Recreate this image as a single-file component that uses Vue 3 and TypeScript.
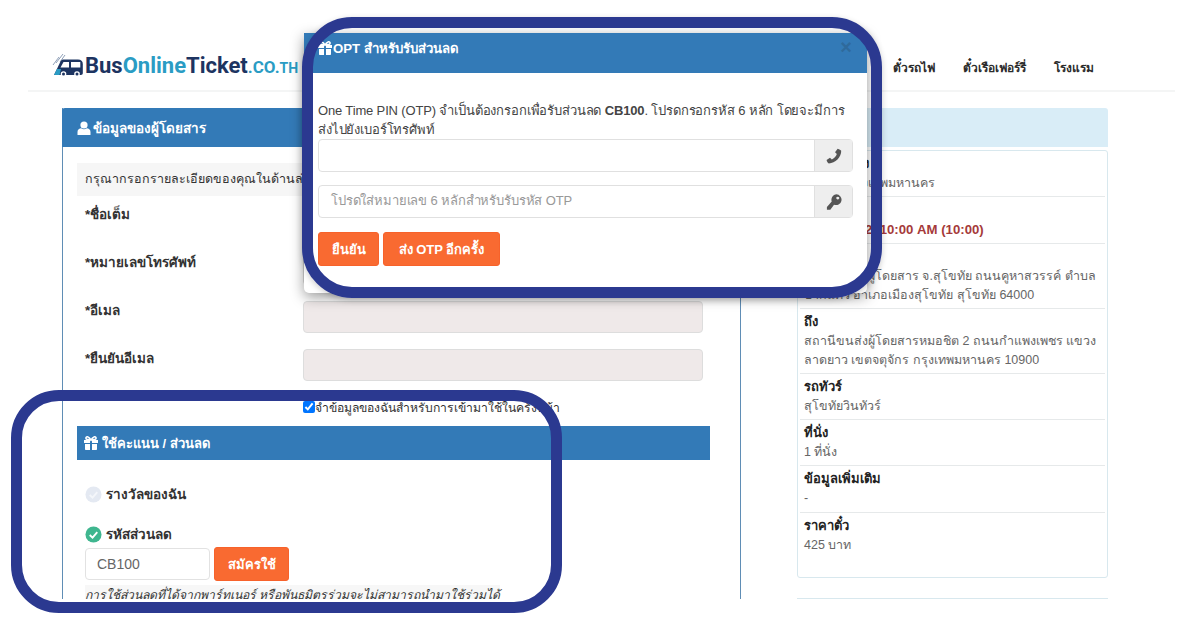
<template>
  <div class="shot">
    <div class="page">
      <header class="topbar">
        <a class="logo">
          <svg class="logo-bus" viewBox="0 0 32 24" width="32" height="24">
            <path d="M1 12 7 4M4 10l7-9M8 9l5-7" stroke="#8fa0b8" stroke-width="1" fill="none" />
            <path d="M2 22 8.500 8.500C9.300 7 10.200 6.500 12 6.500h14c3 0 4.800 1.700 4.800 4.300V20c0 1.300-.7 2-2 2z" fill="#1d3461" />
            <path d="M11.500 9H17v5.500H8.500zM19 9h9.300v5.500H19z" fill="#fff" />
            <path d="M2 22 5 16h4l-1.500 6z" fill="#2a9cc4" />
            <circle cx="11.500" cy="21" r="2.800" fill="#fff" />
            <circle cx="11.500" cy="21" r="1.500" fill="#1d3461" />
            <circle cx="25" cy="21" r="2.800" fill="#fff" />
            <circle cx="25" cy="21" r="1.500" fill="#1d3461" />
          </svg>
          <span class="logo-text">
            <span class="navy">Bus</span><span class="teal">Online</span><span class="navy">Ticket</span><span class="teal small">.CO.</span><span class="teal tiny">TH</span>
          </span>
        </a>
        <nav class="menu">
          <a v-for="link in navLinks" :key="link">{{ link }}</a>
        </nav>
      </header>

      <main class="content">
        <section class="panel-left">
          <h3 class="panel-head">
            <svg class="ico" viewBox="0 0 14 14" width="14" height="14">
              <circle cx="7" cy="4" r="3.600" fill="#fff" />
              <path d="M0.500 14V11c0-2.600 2-3.800 3.600-3.800C5 8 6 8.300 7 8.300S9 8 9.900 7.200c1.600 0 3.600 1.200 3.600 3.800v3z" fill="#fff" />
            </svg>
            ข้อมูลของผู้โดยสาร
          </h3>
          <div class="panel-body">
            <div class="hint">กรุณากรอกรายละเอียดของคุณในด้านล่าง</div>
            <div v-for="row in formRows" :key="row" class="form-row">
              <label>{{ row }}</label>
              <div class="field"></div>
            </div>
            <div class="remember">
              <input type="checkbox" checked />
              <span>จำข้อมูลของฉันสำหรับการเข้ามาใช้ในครั้งหน้า</span>
            </div>
            <h4 class="bar">
              <svg class="ico" viewBox="0 0 14 14" width="14" height="14">
                <path d="M0 4h6v3H0zM8 4h6v3H8zM1 8h5v6H2c-.6 0-1-.4-1-1zM8 8h5v5c0 .6-.4 1-1 1H8z" fill="#fff" />
                <path d="M7 4C5 .5 2.500 0 2 1.800S4 4 7 4c3 0 5.500-.4 5-2.200S9 .5 7 4z" fill="none" stroke="#fff" stroke-width="1.600" />
              </svg>
              ใช้คะแนน / ส่วนลด
            </h4>
            <div class="choice reward">
              <svg viewBox="0 0 18 18" width="17" height="17">
                <circle cx="9" cy="9" r="8.500" fill="#e4e9f2" />
                <path d="M5 9.500 8 12.300 13 6.500" stroke="#f4f6fa" stroke-width="2" fill="none" />
              </svg>
              <b>รางวัลของฉัน</b>
            </div>
            <div class="choice code">
              <svg viewBox="0 0 18 18" width="17" height="17">
                <circle cx="9" cy="9" r="8.500" fill="#3fb68f" />
                <path d="M5 9.500 8 12.300 13 6.500" stroke="#fff" stroke-width="2" fill="none" />
              </svg>
              <b>รหัสส่วนลด</b>
            </div>
            <div class="apply">
              <div class="code-input">CB100</div>
              <button class="btn-orange">สมัครใช้</button>
            </div>
            <p class="note">การใช้ส่วนลดที่ได้จากพาร์ทเนอร์ หรือพันธมิตรร่วมจะไม่สามารถนำมาใช้ร่วมได้</p>
          </div>
        </section>

        <aside class="side">
          <div class="side-head"></div>
          <ul class="summary">
            <li v-for="item in tripInfo" :key="item.label" :class="item.cls">
              <b>{{ item.label }}</b>
              <span :class="{ red: item.red }">{{ item.value }}</span>
            </li>
          </ul>
          <div class="side-next"></div>
        </aside>
      </main>
    </div>

    <!-- popup sits over the form -->
    <div class="modal">
      <div class="modal-head">
        <svg class="ico" viewBox="0 0 14 14" width="14" height="14">
          <path d="M0 4h6v3H0zM8 4h6v3H8zM1 8h5v6H2c-.6 0-1-.4-1-1zM8 8h5v5c0 .6-.4 1-1 1H8z" fill="#fff" />
          <path d="M7 4C5 .5 2.500 0 2 1.800S4 4 7 4c3 0 5.500-.4 5-2.200S9 .5 7 4z" fill="none" stroke="#fff" stroke-width="1.600" />
        </svg>
        <span>OPT สำหรับรับส่วนลด</span>
        <i class="close">×</i>
      </div>
      <div class="modal-body">
        <p>One Time PIN (OTP) จำเป็นต้องกรอกเพื่อรับส่วนลด <b>CB100</b>. โปรดกรอกรหัส 6 หลัก โดยจะมีการส่งไปยังเบอร์โทรศัพท์</p>
        <div class="input-group">
          <div class="ig-field"></div>
          <div class="ig-addon">
            <svg viewBox="0 0 14 14" width="16" height="16">
              <path d="M10.200.600c1.600.5 2.700 1.100 3.100 1.900.3 5.500-5.300 11-10.800 11-.9-.3-1.600-1.400-2-2.900l3-2 1.600 1.400c1.900-.9 3.700-2.800 4.400-4.800L7.900 3.700z" fill="#555" />
            </svg>
          </div>
        </div>
        <div class="input-group">
          <div class="ig-field placeholder">โปรดใส่หมายเลข 6 หลักสำหรับรับรหัส OTP</div>
          <div class="ig-addon">
            <svg viewBox="0 0 14 14" width="16" height="16">
              <path d="M9 .300a4.700 4.700 0 1 1-2 9L3.800 13.800H.800v-2.400L5 6.500A4.700 4.700 0 0 1 9 .300zm1.300 2a1.300 1.300 0 1 0 .01 0z" fill="#555" fill-rule="evenodd" />
            </svg>
          </div>
        </div>
        <div class="modal-actions">
          <button class="btn-orange">ยืนยัน</button>
          <button class="btn-orange wide">ส่ง OTP อีกครั้ง</button>
        </div>
      </div>
    </div>

    <!-- rounded highlight frames drawn on top of the screenshot -->
    <div class="ring ring-modal"></div>
    <div class="ring ring-promo"></div>
  </div>
</template>

<script setup lang="ts">
interface TripItem {
  label: string;
  value: string;
  red?: boolean;
  cls: string;
}

const navLinks: string[] = ['ตั๋วรถไฟ', 'ตั๋วเรือเฟอร์รี่', 'โรงแรม'];

const formRows: string[] = ['*ชื่อเต็ม', '*หมายเลขโทรศัพท์', '*อีเมล', '*ยืนยันอีเมล'];

const tripInfo: TripItem[] = [
  { label: 'การเดินทาง', value: 'สุโขทัย-กรุงเทพมหานคร', cls: 'h-46' },
  { label: 'วันเดินทาง', value: '2 ส.ค. 2022, 10:00 AM (10:00)', red: true, cls: 'h-47' },
  { label: 'จาก', value: 'สถานีขนส่งผู้โดยสาร จ.สุโขทัย ถนนคูหาสวรรค์ ตำบล ปากแคว อำเภอเมืองสุโขทัย สุโขทัย 64000', cls: 'h-65' },
  { label: 'ถึง', value: 'สถานีขนส่งผู้โดยสารหมอชิต 2 ถนนกำแพงเพชร แขวง ลาดยาว เขตจตุจักร กรุงเทพมหานคร 10900', cls: 'h-65' },
  { label: 'รถทัวร์', value: 'สุโขทัยวินทัวร์', cls: 'h-46' },
  { label: 'ที่นั่ง', value: '1 ที่นั่ง', cls: 'h-46' },
  { label: 'ข้อมูลเพิ่มเติม', value: '-', cls: 'h-47' },
  { label: 'ราคาตั๋ว', value: '425 บาท', cls: 'h-last' },
];
</script>

<style>
body {
  background: #fff;
}
</style>

<style scoped>
.shot {
  position: relative;
  width: 1200px;
  height: 630px;
  overflow: hidden;
  background: #fff;
  font-family: "Liberation Sans", "Noto Sans", sans-serif;
  font-size: 13px;
  color: #333;
}

.page {
  height: 599px;
  overflow: hidden;
  padding: 0 25px 0 28px;
  box-sizing: border-box;
}

.topbar {
  display: flex;
  align-items: center;
  justify-content: space-between;
  height: 92px;
  padding: 40px 81px 0 24px;
  border-bottom: 2px solid #f4f5f5;
  box-sizing: border-box;
}

.logo {
  display: flex;
  align-items: center;
  gap: 1px;
}

.logo-text {
  font-family: Roboto, sans-serif;
  font-weight: 700;
  font-size: 22px;
}

.navy { color: #1d3461; }
.teal { color: #2a9cc4; }
.small { font-size: 17px; }
.tiny { font-size: 14px; }

.menu {
  display: flex;
  gap: 28px;
  margin-top: 4px;
  font-size: 12px;
  font-weight: 700;
  color: #2b2b2b;
}

.content {
  display: flex;
  align-items: flex-start;
  padding: 16px 0 0 34px;
}

.panel-left {
  width: 679px;
  height: 520px;
  flex: none;
  border-left: 1px solid #5f8db5;
  border-right: 1px solid #5f8db5;
  box-sizing: border-box;
}

.panel-head {
  display: flex;
  align-items: center;
  gap: 2px;
  height: 39px;
  margin: 0 -1px;
  padding-left: 15px;
  background: #337ab7;
  border-radius: 3px 3px 0 0;
  color: #fff;
  font-size: 13.500px;
}

.panel-body {
  padding: 16px 30px 0 14px;
}

.hint {
  width: 400px;
  height: 33px;
  padding-left: 8px;
  background: #f6f6f6;
  font-size: 12.500px;
  line-height: 33px;
}

.form-row {
  display: flex;
  height: 48px;
  padding-left: 8px;
}

.form-row label {
  width: 218px;
  padding-top: 7px;
  font-weight: 700;
  font-size: 13.500px;
}

.field {
  width: 400px;
  height: 32px;
  margin-top: 9px;
  background: #efe9e9;
  border: 1px solid #ddd;
  border-radius: 4px;
  box-sizing: border-box;
}

.remember {
  display: flex;
  align-items: center;
  height: 20px;
  margin-top: 9px;
  padding-left: 226px;
  font-size: 12.200px;
}

.remember input {
  width: 12px;
  height: 12px;
  margin: 0;
}

.bar {
  display: flex;
  align-items: center;
  gap: 4px;
  height: 34px;
  margin: 9px 0 0;
  padding-left: 7px;
  background: #337ab7;
  color: #fff;
  font-size: 13px;
}

.choice {
  display: flex;
  align-items: center;
  gap: 4px;
  height: 20px;
  padding-left: 8px;
  font-size: 13.500px;
}

.reward { margin-top: 24px; }
.code { margin-top: 20px; }

.apply {
  display: flex;
  align-items: center;
  gap: 4px;
  margin: 3px 0 0 8px;
}

.code-input {
  width: 125px;
  height: 32px;
  padding-left: 11px;
  border: 1px solid #e2e2e2;
  border-radius: 4px;
  box-sizing: border-box;
  color: #666;
  font-size: 14px;
  line-height: 30px;
}

.btn-orange {
  height: 34px;
  padding: 0 12.500px;
  border: 1px solid #f7622b;
  border-radius: 3px;
  background: #f96a31;
  color: #fff;
  font: 700 13px "Liberation Sans", "Noto Sans", sans-serif;
}

.btn-orange.wide {
  width: 117px;
  padding: 0;
}

.note {
  width: 415px;
  margin: 4px 0 0 8px;
  background: #f7f7f7;
  font-style: italic;
  font-size: 12.200px;
  white-space: nowrap;
}

.side {
  width: 311px;
  margin-left: 56px;
  flex: none;
}

.side-head {
  height: 39px;
  background: #d9edf7;
  border-radius: 3px 3px 0 0;
}

.summary {
  height: 428px;
  margin: 3px 0 0;
  padding: 0 2px;
  border: 1px solid #d8e8ee;
  border-radius: 3px;
  box-sizing: border-box;
  list-style: none;
}

.summary li {
  display: flex;
  flex-direction: column;
  padding: 3px 4px 0;
  border-bottom: 1px solid #e6e9ea;
  box-sizing: border-box;
  line-height: 19.500px;
}

.summary li b { color: #222; }
.summary li span { color: #666; font-size: 12.500px; }
.summary li span.red { color: #a53a3a; font-weight: 700; font-size: 13.200px; }
.summary li:last-child { border-bottom: none; }

.h-46 { height: 46px; }
.h-47 { height: 47px; }
.h-65 { height: 65px; }
.h-last { height: 66px; }

.side-next {
  height: 6px;
  margin-top: 20px;
  border-top: 2px solid #d8e8ee;
}

.modal {
  position: absolute;
  left: 304px;
  top: 33px;
  width: 563px;
  height: 260px;
  background: #fff;
  border-radius: 0 0 5px 5px;
  box-shadow: 0 4px 14px rgba(0, 0, 0, 0.4);
}

.modal-head {
  position: relative;
  display: flex;
  align-items: center;
  gap: 1px;
  height: 40px;
  padding: 0 0 10px 14px;
  background: #337ab7;
  box-sizing: border-box;
  color: #fff;
  font-weight: 700;
  font-size: 13.200px;
}

.close {
  position: absolute;
  right: 15px;
  top: 3px;
  color: #2f6a9c;
  font-style: normal;
  font-size: 20px;
}

.modal-body {
  padding: 28px 14px 0 14px;
  font-size: 13px;
  letter-spacing: -0.15px;
}

.modal-body p {
  margin: 0;
  color: #444;
  line-height: 19px;
}

.input-group {
  display: flex;
  width: 535px;
  height: 33px;
  margin-bottom: 13px;
  border: 1px solid #e0e0e0;
  border-radius: 4px;
  box-sizing: border-box;
}

.ig-field {
  flex: 1;
  padding-left: 12px;
  line-height: 30px;
}

.placeholder { color: #999; }

.ig-addon {
  display: flex;
  align-items: center;
  justify-content: center;
  width: 37px;
  background: #eee;
  border-left: 1px solid #e0e0e0;
}

.modal-actions {
  display: flex;
  gap: 4px;
  padding-top: 1px;
}

.ring {
  position: absolute;
  border: 11px solid #2b3990;
  border-radius: 48px;
  box-sizing: border-box;
  pointer-events: none;
}

.ring-modal {
  left: 302px;
  top: 17px;
  width: 580px;
  height: 281px;
  border-radius: 50px;
  box-shadow: 0 2px 6px rgba(0, 0, 0, 0.2);
}

.ring-promo {
  left: 11px;
  top: 390px;
  width: 551px;
  height: 223px;
}
</style>
